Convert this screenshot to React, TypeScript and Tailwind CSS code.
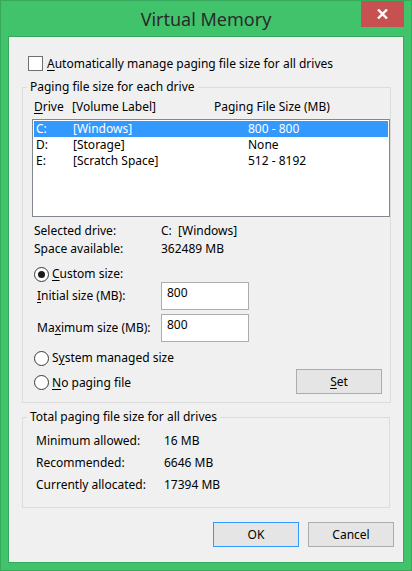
import type { ReactNode } from "react";

type Drive = {
  letter: string;
  label: string;
  size: string;
};

const drives: Drive[] = [
  { letter: "C:", label: "[Windows]", size: "800 - 800" },
  { letter: "D:", label: "[Storage]", size: "None" },
  { letter: "E:", label: "[Scratch Space]", size: "512 - 8192" }
];

const totals = [
  { label: "Minimum allowed:", value: "16 MB" },
  { label: "Recommended:", value: "6646 MB" },
  { label: "Currently allocated:", value: "17394 MB" }
];

// underline the access key like Win32 dialogs do
function Key({ children }: { children: ReactNode }) {
  return <span className="underline underline-offset-[2px]">{children}</span>;
}

function Radio({ checked, children }: { checked?: boolean; children: ReactNode }) {
  return (
    <label className="flex items-center gap-[3px]">
      <span className="flex h-[15px] w-[15px] items-center justify-center rounded-full border border-[#3a3a3a] bg-white">
        {checked ? <span className="h-[7px] w-[7px] rounded-full bg-[#1a1a1a]" /> : null}
      </span>
      <span>{children}</span>
    </label>
  );
}

function Button({ children, primary }: { children: ReactNode; primary?: boolean }) {
  return (
    <button
      type="button"
      className={
        primary
          ? "h-[25px] w-[86px] border border-[#3399ff] bg-[#e5e5e5]"
          : "h-[25px] w-[86px] border border-[#acacac] bg-[#e5e5e5]"
      }
    >
      {children}
    </button>
  );
}

function SizeField({ label, value }: { label: ReactNode; value: string }) {
  return (
    <div className="flex h-[28px] items-center">
      <span className="w-[129px] pl-[5px]">{label}</span>
      <div className="h-[28px] w-[88px] border border-[#abadb3] bg-white pl-[5px] pt-[2px] leading-[16px]">{value}</div>
    </div>
  );
}

export default function App() {
  return (
    <div className="h-[571px] w-[412px] border border-[#36a95a] bg-[#41c36c] font-['Noto_Sans',sans-serif] text-[12px] text-black">
      <div className="grid h-[35px] grid-cols-[1fr_auto_1fr]">
        <div />
        <h1 className="pt-[5px] text-[18px] leading-[26px] text-[#2b2b2b]">Virtual Memory</h1>
        <div className="flex justify-end pr-[7px]">
          <button type="button" className="flex h-[26px] w-[43px] items-center justify-center bg-[#c75050]">
            <svg width="11" height="10" viewBox="0 0 11 10">
              <path d="M1 0.5 L10 9.5 M10 0.5 L1 9.5" stroke="white" strokeWidth="2.4" />
            </svg>
          </button>
        </div>
      </div>

      <div className="mx-[7px] h-[527px] border border-[#36a95a] bg-[#f0f0f0] px-[13px] pt-[19px]">
        <label className="ml-[6px] flex h-[15px] items-center gap-[4px]">
          <span className="h-[15px] w-[15px] border border-[#707070] bg-white" />
          <span>
            <Key>A</Key>utomatically manage paging file size for all drives
          </span>
        </label>

        <fieldset className="mt-[8px] border border-[#dcdcdc] pb-[8px] pl-[9px]">
          <legend className="-ml-[5px] px-[3px] leading-[16px]">Paging file size for each drive</legend>
          <div className="mt-[4px] flex h-[16px] items-center pl-[2px]">
            <span className="w-[38px]">
              <Key>D</Key>rive
            </span>
            <span className="w-[142px]">[Volume Label]</span>
            <span>Paging File Size (MB)</span>
          </div>

          <div className="mt-[4px] h-[98px] w-[358px] border border-[#828790] bg-white p-px">
            {drives.map((d, i) => (
              <div
                key={d.letter}
                className={
                  i === 0
                    ? "flex h-[16px] items-center bg-[#3399ff] pl-[2px] text-white"
                    : "flex h-[16px] items-center pl-[2px]"
                }
              >
                <span className="w-[37px]">{d.letter}</span>
                <span className="w-[175px]">{d.label}</span>
                <span>{d.size}</span>
              </div>
            ))}
          </div>

          <div className="mt-[5px] flex h-[18px] items-center pl-[2px]">
            <span className="w-[127px]">Selected drive:</span>
            <span>C:&nbsp; [Windows]</span>
          </div>
          <div className="flex h-[18px] items-center pl-[2px]">
            <span className="w-[127px]">Space available:</span>
            <span>362489 MB</span>
          </div>

          <div className="mt-[8px] flex h-[16px] items-center pl-[2px]">
            <Radio checked>
              <Key>C</Key>ustom size:
            </Radio>
          </div>
          <SizeField
            label={
              <>
                <Key>I</Key>nitial size (MB):
              </>
            }
            value="800"
          />
          <div className="mt-[4px]">
            <SizeField
              label={
                <>
                  Ma<Key>x</Key>imum size (MB):
                </>
              }
              value="800"
            />
          </div>

          <div className="mt-[8px] flex h-[16px] items-center pl-[2px]">
            <Radio>
              S<Key>y</Key>stem managed size
            </Radio>
          </div>
          <div className="mt-[3px] flex h-[25px] items-center justify-between pl-[2px] pr-[8px]">
            <div className="pt-[2px]">
              <Radio>
                <Key>N</Key>o paging file
              </Radio>
            </div>
            <Button>
              <Key>S</Key>et
            </Button>
          </div>
        </fieldset>

        <fieldset className="mt-[6px] border border-[#dcdcdc] pb-[11px] pl-[13px] pt-[5px]">
          <legend className="-ml-[9px] px-[3px] leading-[16px]">Total paging file size for all drives</legend>
          {totals.map((t) => (
            <div key={t.label} className="flex h-[22px] items-center">
              <span className="w-[128px]">{t.label}</span>
              <span>{t.value}</span>
            </div>
          ))}
        </fieldset>

        <div className="-mr-[4px] mt-[14px] flex justify-end gap-[9px]">
          <Button primary>OK</Button>
          <Button>Cancel</Button>
        </div>
      </div>
    </div>
  );
}
